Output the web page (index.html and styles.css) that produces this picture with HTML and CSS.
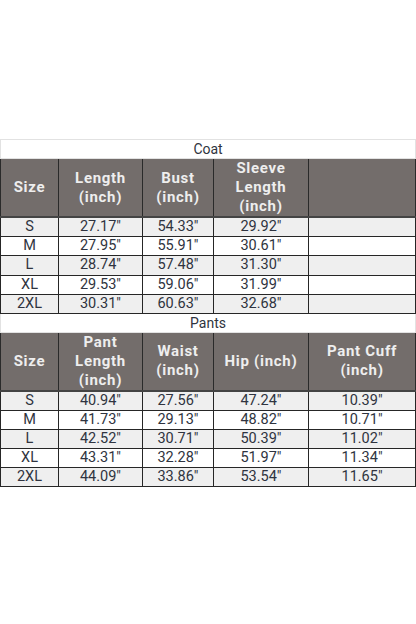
FILE: index.html
```html
<!DOCTYPE html>
<html>
<head>
<meta charset="utf-8">
<link rel="stylesheet" href="styles.css">
</head>
<body>
<div class="page">
<table class="chart">
  <colgroup>
    <col class="c1"><col class="c2"><col class="c3"><col class="c4"><col class="c5">
  </colgroup>
  <tbody>
    <tr class="title"><td colspan="5">Coat</td></tr>
    <tr class="head">
      <th>Size</th><th>Length<br>(inch)</th><th>Bust<br>(inch)</th><th>Sleeve<br>Length<br>(inch)</th><th></th>
    </tr>
    <tr class="odd"><td>S</td><td>27.17"</td><td>54.33"</td><td>29.92"</td><td></td></tr>
    <tr class="even"><td>M</td><td>27.95"</td><td>55.91"</td><td>30.61"</td><td></td></tr>
    <tr class="odd"><td>L</td><td>28.74"</td><td>57.48"</td><td>31.30"</td><td></td></tr>
    <tr class="even"><td>XL</td><td>29.53"</td><td>59.06"</td><td>31.99"</td><td></td></tr>
    <tr class="odd"><td>2XL</td><td>30.31"</td><td>60.63"</td><td>32.68"</td><td></td></tr>
    <tr class="title"><td colspan="5">Pants</td></tr>
    <tr class="head">
      <th>Size</th><th>Pant<br>Length<br>(inch)</th><th>Waist<br>(inch)</th><th>Hip (inch)</th><th>Pant Cuff<br>(inch)</th>
    </tr>
    <tr class="odd p"><td>S</td><td>40.94"</td><td>27.56"</td><td>47.24"</td><td>10.39"</td></tr>
    <tr class="even p"><td>M</td><td>41.73"</td><td>29.13"</td><td>48.82"</td><td>10.71"</td></tr>
    <tr class="odd p"><td>L</td><td>42.52"</td><td>30.71"</td><td>50.39"</td><td>11.02"</td></tr>
    <tr class="even p"><td>XL</td><td>43.31"</td><td>32.28"</td><td>51.97"</td><td>11.34"</td></tr>
    <tr class="odd p"><td>2XL</td><td>44.09"</td><td>33.86"</td><td>53.54"</td><td>11.65"</td></tr>
  </tbody>
</table>
</div>
</body>
</html>
```
FILE: styles.css
```css
html, body {
  margin: 0;
  padding: 0;
  background: #ffffff;
}
.page {
  width: 416px;
  height: 624px;
  padding-top: 139px;
  box-sizing: border-box;
}
.chart {
  width: 415px;
  table-layout: fixed;
  border-collapse: collapse;
  font-family: Roboto, "Liberation Sans", sans-serif;
  color: #2f3440;
}
.c1 { width: 58px; }
.c2 { width: 84px; }
.c3 { width: 71px; }
.c4 { width: 95px; }
.c5 { width: 107px; }
.chart td, .chart th {
  padding: 0;
  text-align: center;
  vertical-align: middle;
}
.title td {
  height: 18px;
  font-size: 14px;
  line-height: 18px;
  border: 1px solid #e2e2e2;
  color: #2f3440;
}
.head th {
  height: 56px;
  background: #736d6b;
  color: #eeeeee;
  font-weight: 700;
  font-size: 15px;
  line-height: 19px;
  letter-spacing: 0.7px;
  border-left: 1px solid #2a2a2a;
  border-right: 1px solid #2a2a2a;
  border-top: 1px solid #3a3a3a;
  border-bottom: 2px solid #444;
}
.odd td, .even td {
  height: 18.2px;
  font-size: 14.5px;
  line-height: 18px;
  border: 1px solid #262626;
}
.p td {
  height: 17.8px;
}
.odd td { background: #efefef; }
.even td { background: #ffffff; }
```
